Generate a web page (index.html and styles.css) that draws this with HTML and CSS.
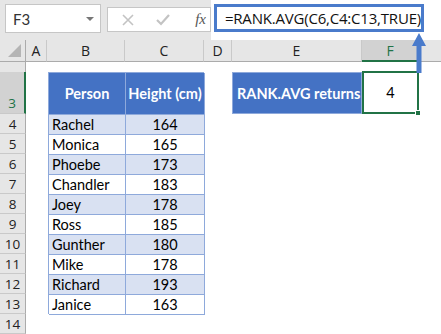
FILE: index.html
```html
<!DOCTYPE html>
<html>
<head lang="en">
	<meta charset="UTF-8">
	<title>RANK.AVG</title>
	<link rel="stylesheet" href="styles.css">
</head>
<body>
	<!-- 名称框与编辑栏 -->
	<div class="topbar">
		<div class="namebox">
			<span>F3</span>
			<i class="drop"></i>
		</div>
		<div class="fxbox">
			<svg width="12" height="12" viewBox="0 0 12 12"><path d="M1 1L11 11M11 1L1 11" stroke="#c3c3c3" stroke-width="1.6" fill="none"/></svg>
			<svg width="14" height="12" viewBox="0 0 14 12"><path d="M1 6L5 10L13 1" stroke="#c3c3c3" stroke-width="2.2" fill="none"/></svg>
			<span class="fx">fx</span>
		</div>
		<div class="formula">
			<span class="formula-text">=RANK.AVG(C6,C4:C13,TRUE)</span>
		</div>
	</div>

	<!-- 工作表 -->
	<div class="sheet">
		<div class="colhead corner"><i></i></div>
		<div class="colhead">A</div>
		<div class="colhead">B</div>
		<div class="colhead">C</div>
		<div class="colhead">D</div>
		<div class="colhead">E</div>
		<div class="colhead active">F</div>
		<div class="colhead last"></div>

		<div class="rowhead small"></div>
		<div class="rowhead active">3</div>
		<div class="rowhead">4</div>
		<div class="rowhead">5</div>
		<div class="rowhead">6</div>
		<div class="rowhead">7</div>
		<div class="rowhead">8</div>
		<div class="rowhead">9</div>
		<div class="rowhead">10</div>
		<div class="rowhead">11</div>
		<div class="rowhead">12</div>
		<div class="rowhead">13</div>
		<div class="rowhead">14</div>

		<div class="table">
			<div class="th">Person</div>
			<div class="th">Height (cm)</div>
			<div class="td">Rachel</div><div class="td num">164</div>
			<div class="td">Monica</div><div class="td num">165</div>
			<div class="td">Phoebe</div><div class="td num">173</div>
			<div class="td">Chandler</div><div class="td num">183</div>
			<div class="td">Joey</div><div class="td num">178</div>
			<div class="td">Ross</div><div class="td num">185</div>
			<div class="td">Gunther</div><div class="td num">180</div>
			<div class="td">Mike</div><div class="td num">178</div>
			<div class="td">Richard</div><div class="td num">193</div>
			<div class="td">Janice</div><div class="td num">163</div>
		</div>

		<div class="label">RANK.AVG returns</div>
		<div class="result">4<i class="handle"></i></div>
	</div>

	<!-- 指向编辑栏的箭头 -->
	<svg class="arrow" width="16" height="42" viewBox="0 0 16 42">
		<path d="M8 0L15 13H10.5V40H5.5V13H1Z" fill="#4a7bcb"/>
	</svg>
</body>
</html>
```

FILE: styles.css
```css
* {
	margin: 0;
	padding: 0;
	box-sizing: border-box;
}

body {
	width: 441px;
	height: 334px;
	overflow: hidden;
	position: relative;
	background: #fff;
	font-family: Lato, "Liberation Sans", sans-serif;
	color: #000;
}

/* 编辑栏 */
.topbar {
	height: 40px;
	background: #e6e6e6;
	display: flex;
	align-items: flex-start;
	padding-left: 5px;
}

.namebox {
	margin-top: 4px;
	width: 102px;
	height: 29px;
	background: #fff;
	border: 1px solid #c6c6c6;
	display: flex;
	align-items: center;
	justify-content: space-between;
	padding: 0 6px 0 7px;
	font-size: 15px;
	color: #333;
}

.drop {
	width: 0;
	height: 0;
	border-left: 4px solid transparent;
	border-right: 4px solid transparent;
	border-top: 4px solid #777;
}

.fxbox {
	margin: 7px 0 0 6px;
	width: 110px;
	height: 25px;
	background: #fff;
	border: 1px solid #c6c6c6;
	display: flex;
	align-items: center;
	gap: 22px;
	padding-left: 14px;
}

.fx {
	font-family: "Liberation Serif", serif;
	font-style: italic;
	font-size: 15px;
	color: #555;
	margin-left: 3px;
}

.formula {
	flex: 1;
	height: 40px;
	background: #fff;
	padding: 4px 17px 0 3px;
}

.formula-text {
	display: block;
	height: 28px;
	border: 3px solid #4a7bcb;
	padding-left: 8px;
	font-family: "Open Sans", sans-serif;
	font-size: 15px;
	line-height: 22px;
	letter-spacing: -0.2px;
	color: #111;
}

/* 工作表网格 */
.sheet {
	display: grid;
	grid-template-columns: 26px 21px 78px 79px 28px 130px 57px 1fr;
	grid-template-rows: 22px 10px 42px repeat(11, 20px);
	font-size: 14.5px;
}

.colhead {
	background: #e6e6e6;
	border-right: 1px solid #c9c9c9;
	border-bottom: 1px solid #ababab;
	text-align: center;
	line-height: 21px;
	font-family: "Open Sans", sans-serif;
	font-size: 14px;
	color: #222;
}

.colhead.last {
	border-right: none;
}

.colhead.active {
	background: #d2d2d2;
	border-bottom: 2px solid #217346;
	color: #217346;
}

.corner {
	position: relative;
	border-right: 1px solid #ababab;
}

.corner i {
	position: absolute;
	right: 4px;
	bottom: 4px;
	width: 0;
	height: 0;
	border-left: 13px solid transparent;
	border-bottom: 13px solid #b4b4b4;
}

.rowhead {
	grid-column: 1;
	background: #e6e6e6;
	border-right: 1px solid #ababab;
	border-bottom: 1px solid #c9c9c9;
	text-align: center;
	line-height: 20px;
	font-family: "Open Sans", sans-serif;
	font-size: 13.5px;
	color: #222;
}

.rowhead.small {
	border-bottom: none;
}

.rowhead.active {
	background: #d2d2d2;
	border-right: 2px solid #217346;
	color: #217346;
	display: flex;
	align-items: flex-end;
	justify-content: center;
	line-height: 20px;
}

/* 数据表 */
.table {
	grid-column: 3 / 5;
	grid-row: 3 / 14;
	margin-left: 1px;
	display: grid;
	grid-template-columns: 77px 79px;
	grid-template-rows: 42px repeat(10, 20px);
	border-top: 1px solid #8ea9db;
	border-left: 1px solid #8ea9db;
}

.th,
.td {
	border-right: 1px solid #8ea9db;
	border-bottom: 1px solid #8ea9db;
}

.th {
	background: #4472c4;
	color: #fff;
	font-weight: bold;
	display: flex;
	align-items: center;
	justify-content: center;
}

.td {
	padding-left: 3px;
	line-height: 19px;
}

.td:nth-child(4n+3),
.td:nth-child(4n+4) {
	background: #d9e1f2;
}

.td.num {
	text-align: center;
	padding-left: 0;
}

.label {
	grid-column: 6;
	grid-row: 3;
	background: #4472c4;
	border: 1px solid #8ea9db;
	color: #fff;
	font-weight: bold;
	display: flex;
	align-items: center;
	padding-left: 4px;
}

.result {
	grid-column: 7;
	grid-row: 3;
	position: relative;
	border: 2px solid #217346;
	display: flex;
	align-items: center;
	justify-content: center;
	margin: -1px 0 0 0;
}

.handle {
	position: absolute;
	right: -4px;
	bottom: -4px;
	width: 6px;
	height: 6px;
	background: #217346;
	border: 1px solid #fff;
}

.arrow {
	position: absolute;
	left: 411px;
	top: 33px;
}
```
